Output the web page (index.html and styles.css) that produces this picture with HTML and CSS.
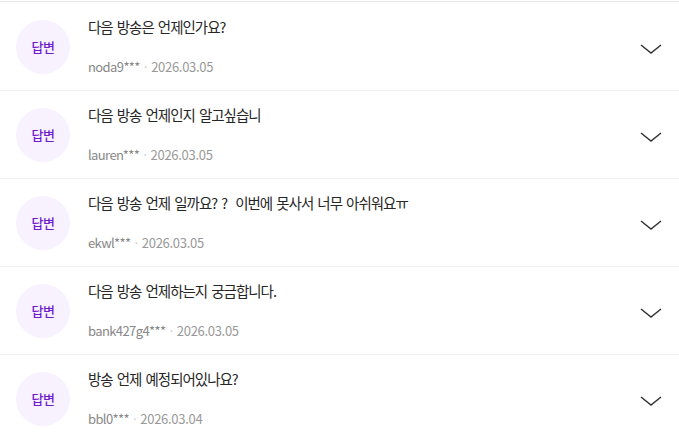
FILE: index.html
```html
<!DOCTYPE html>
<html lang="ko">
<head>
<meta charset="utf-8">
<link rel="stylesheet" href="styles.css">
</head>
<body>
<ul class="qna">
  <li class="item">
    <span class="badge">답변</span>
    <div class="body">
      <p class="title">다음 방송은 언제인가요?</p>
      <p class="meta"><span class="user">noda9***</span><span class="dot">·</span><span class="date">2026.03.05</span></p>
    </div>
    <svg class="chev" viewBox="0 0 24 12" width="24" height="12"><path d="M2 2 L12 10 L22 2" fill="none" stroke="#333" stroke-width="1.5"/></svg>
  </li>
  <li class="item">
    <span class="badge">답변</span>
    <div class="body">
      <p class="title">다음 방송 언제인지 알고싶습니</p>
      <p class="meta"><span class="user">lauren***</span><span class="dot">·</span><span class="date">2026.03.05</span></p>
    </div>
    <svg class="chev" viewBox="0 0 24 12" width="24" height="12"><path d="M2 2 L12 10 L22 2" fill="none" stroke="#333" stroke-width="1.5"/></svg>
  </li>
  <li class="item">
    <span class="badge">답변</span>
    <div class="body">
      <p class="title">다음 방송 언제 일까요? ?  이번에 못사서 너무 아쉬워요ㅠ</p>
      <p class="meta"><span class="user">ekwl***</span><span class="dot">·</span><span class="date">2026.03.05</span></p>
    </div>
    <svg class="chev" viewBox="0 0 24 12" width="24" height="12"><path d="M2 2 L12 10 L22 2" fill="none" stroke="#333" stroke-width="1.5"/></svg>
  </li>
  <li class="item">
    <span class="badge">답변</span>
    <div class="body">
      <p class="title">다음 방송 언제하는지 궁금합니다.</p>
      <p class="meta"><span class="user">bank427g4***</span><span class="dot">·</span><span class="date">2026.03.05</span></p>
    </div>
    <svg class="chev" viewBox="0 0 24 12" width="24" height="12"><path d="M2 2 L12 10 L22 2" fill="none" stroke="#333" stroke-width="1.5"/></svg>
  </li>
  <li class="item">
    <span class="badge">답변</span>
    <div class="body">
      <p class="title">방송 언제 예정되어있나요?</p>
      <p class="meta"><span class="user">bbl0***</span><span class="dot">·</span><span class="date">2026.03.04</span></p>
    </div>
    <svg class="chev" viewBox="0 0 24 12" width="24" height="12"><path d="M2 2 L12 10 L22 2" fill="none" stroke="#333" stroke-width="1.5"/></svg>
  </li>
</ul>
</body>
</html>
```
FILE: styles.css
```css
html, body {
  margin: 0;
  padding: 0;
  background: #fff;
}
body {
  font-family: "Noto Sans CJK KR", "Noto Sans", sans-serif;
  overflow: hidden;
}
.qna {
  list-style: none;
  margin: 1px 0 0;
  padding: 1px 0 0;
  border-top: 1px solid #e6e6e6;
}
.item {
  display: flex;
  align-items: center;
  height: 87px;
  border-bottom: 1px solid #f0f0f0;
  padding: 0 16px;
}
.badge {
  flex: none;
  width: 54px;
  height: 54px;
  border-radius: 50%;
  background: #f8f1ff;
  color: #6f1ccc;
  font-size: 13px;
  font-weight: 500;
  display: flex;
  align-items: center;
  justify-content: center;
  letter-spacing: -0.5px;
}
.body {
  flex: 1;
  margin-left: 18px;
  align-self: stretch;
  display: flex;
  flex-direction: column;
  padding-top: 14px;
}
.title {
  margin: 0;
  font-size: 14.5px;
  line-height: 20px;
  color: #262626;
  letter-spacing: -1px;
  word-spacing: 1px;
  white-space: pre;
}
.meta {
  margin: 21px 0 0;
  font-size: 13px;
  line-height: 18px;
  color: #888;
  letter-spacing: -0.3px;
}
.user {
  letter-spacing: -0.6px;
}
.dot {
  color: #ccc;
  margin: 0 4px;
}
.date {
  color: #999;
}
.chev {
  flex: none;
  margin-top: 4px;
}
```
